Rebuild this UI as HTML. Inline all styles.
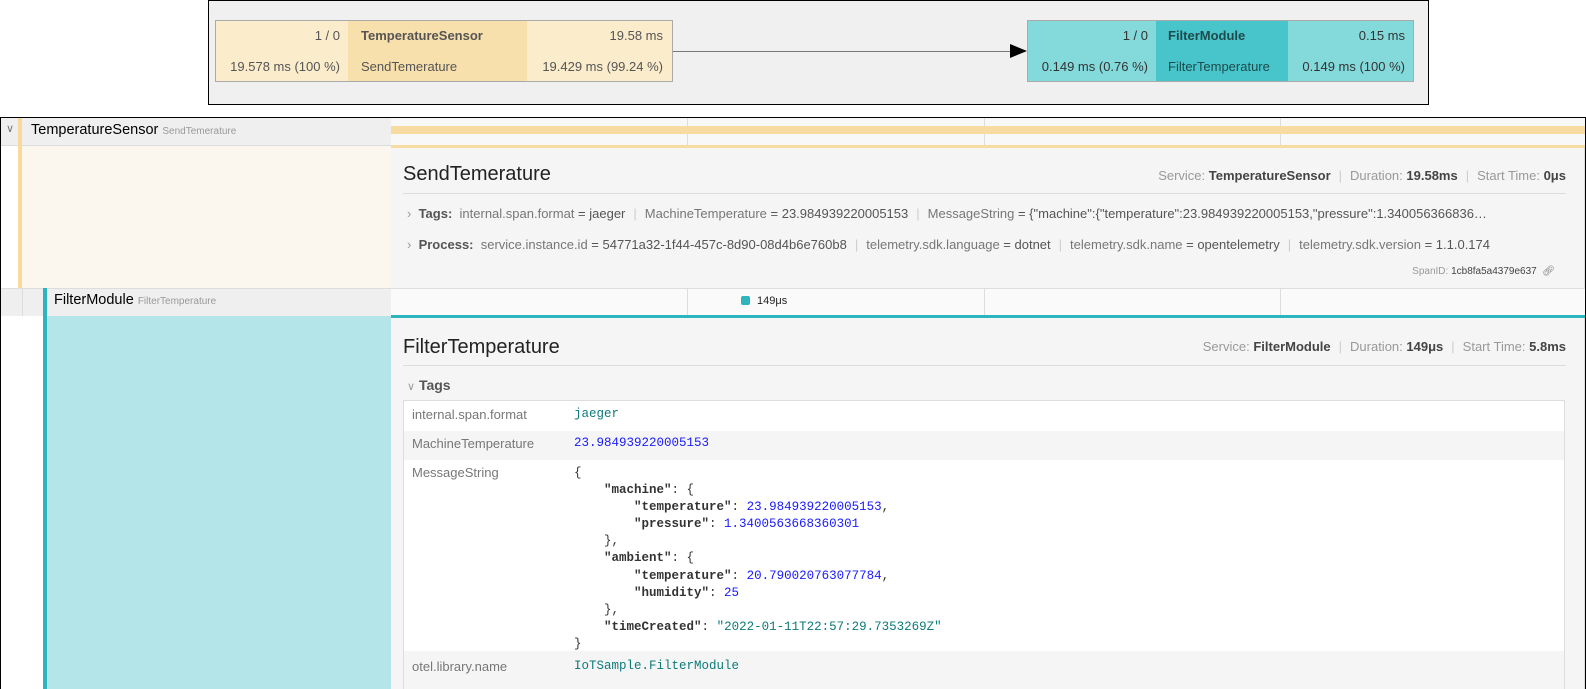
<!DOCTYPE html>
<html><head><meta charset="utf-8"><style>
*{box-sizing:border-box;margin:0;padding:0}
body{width:1586px;height:689px;background:#fff;font-family:"Liberation Sans",sans-serif;position:relative;overflow:hidden;color:#333}
.a{position:absolute}
.mono{font-family:"Liberation Mono",monospace}
.cell{position:absolute;font-size:13px;color:#555}
.sep{color:#ccc;margin:0 8px}
.k{color:#777}
</style></head><body>
<!-- top graph -->
<div class="a" style="left:208px;top:0;width:1221px;height:105px;border:1px solid #000;background:#f0f0f0"></div>
<div class="a" style="left:215px;top:20px;width:458px;height:62px;border:1px solid #aaa;background:#fbeccc"></div>
<div class="a" style="left:348px;top:21px;width:179px;height:60px;background:#f8e0ad"></div>
<div class="cell" style="left:220px;top:28px;width:120px;text-align:right">1 / 0</div>
<div class="cell" style="left:220px;top:59px;width:120px;text-align:right">19.578 ms (100 %)</div>
<div class="cell" style="left:361px;top:28px;font-weight:bold;color:#555">TemperatureSensor</div>
<div class="cell" style="left:361px;top:59px">SendTemerature</div>
<div class="cell" style="left:530px;top:28px;width:133px;text-align:right">19.58 ms</div>
<div class="cell" style="left:530px;top:59px;width:133px;text-align:right">19.429 ms (99.24 %)</div>
<div class="a" style="left:673px;top:51px;width:340px;height:1px;background:#777"></div>
<svg class="a" style="left:1010px;top:44px" width="18" height="14"><path d="M0 0L17 7L0 14Z" fill="#000"/></svg>
<div class="a" style="left:1027px;top:20px;width:387px;height:62px;border:1px solid #aaa;background:#84d9db"></div>
<div class="a" style="left:1156px;top:21px;width:132px;height:60px;background:#48c5ca"></div>
<div class="cell" style="left:1030px;top:28px;width:118px;text-align:right;color:#333">1 / 0</div>
<div class="cell" style="left:1030px;top:59px;width:118px;text-align:right;color:#333">0.149 ms (0.76 %)</div>
<div class="cell" style="left:1168px;top:28px;font-weight:bold;color:#1e4a4c">FilterModule</div>
<div class="cell" style="left:1168px;top:59px;color:#1e4a4c">FilterTemperature</div>
<div class="cell" style="left:1290px;top:28px;width:115px;text-align:right;color:#333">0.15 ms</div>
<div class="cell" style="left:1290px;top:59px;width:115px;text-align:right;color:#333">0.149 ms (100 %)</div>

<!-- bottom frame -->
<div class="a" style="left:0;top:117px;width:1586px;height:572px;border:1px solid #000;border-bottom:none;overflow:hidden">
 <div class="a" style="left:0;top:0;width:390px;height:28px;background:#efefef;border-bottom:1px solid #ddd"></div>
 <div class="a" style="left:5px;top:4px;font-size:11px;color:#777">&#8744;</div>
 <div class="a" style="left:17px;top:0;width:4px;height:170px;background:#f8d99e"></div>
 <div class="a" style="left:30px;top:4px;font-size:14.5px;color:#000">TemperatureSensor <span style="font-size:10px;color:#999">SendTemerature</span></div>
 <div class="a" style="left:390px;top:0;width:1196px;height:28px;background:#f8f8f8"></div>
 <div class="a" style="left:686px;top:0;width:1px;height:28px;background:#ddd"></div>
 <div class="a" style="left:983px;top:0;width:1px;height:28px;background:#ddd"></div>
 <div class="a" style="left:1279px;top:0;width:1px;height:28px;background:#ddd"></div>
 <div class="a" style="left:390px;top:8px;width:1196px;height:8px;background:#f8dba0"></div>
 <div class="a" style="left:390px;top:27px;width:1196px;height:3px;background:#f8dba0"></div>
 <div class="a" style="left:21px;top:28px;width:369px;height:142px;background:#fbf7ee"></div>
 <div class="a" style="left:390px;top:30px;width:1194px;height:140px;background:#f5f5f5;border-right:1px solid #ddd"></div>
 <div class="a" style="left:402px;top:45px;font-size:20px;color:#222">SendTemerature</div>
 <div class="a" style="left:1000px;top:50px;width:565px;text-align:right;font-size:13px;color:#999">Service: <b style="color:#444">TemperatureSensor</b><span class="sep">|</span>Duration: <b style="color:#444">19.58ms</b><span class="sep">|</span>Start Time: <b style="color:#444">0μs</b></div>
 <div class="a" style="left:402px;top:75px;width:1163px;height:1px;background:#ddd"></div>
 <div class="a" style="left:406px;top:88px;font-size:13px;color:#555;white-space:nowrap"><span style="color:#999">›</span>&nbsp; <b>Tags:</b>&nbsp; <span class="k">internal.span.format</span> = jaeger<span class="sep">|</span><span class="k">MachineTemperature</span> = 23.984939220005153<span class="sep">|</span><span class="k">MessageString</span> = {"machine":{"temperature":23.984939220005153,"pressure":1.340056366836…</div>
 <div class="a" style="left:406px;top:119px;font-size:13px;color:#555;white-space:nowrap"><span style="color:#999">›</span>&nbsp; <b>Process:</b>&nbsp; <span class="k">service.instance.id</span> = 54771a32-1f44-457c-8d90-08d4b6e760b8<span class="sep">|</span><span class="k">telemetry.sdk.language</span> = dotnet<span class="sep">|</span><span class="k">telemetry.sdk.name</span> = opentelemetry<span class="sep">|</span><span class="k">telemetry.sdk.version</span> = 1.1.0.174</div>
 <div class="a" style="left:1300px;top:148px;width:254px;text-align:right;font-size:10px;color:#999">SpanID: <span style="color:#444">1cb8fa5a4379e637</span> &nbsp;<span style="color:#777">&#x1F517;&#xFE0E;</span></div>
 <div class="a" style="left:0;top:170px;width:390px;height:28px;background:#efefef;border-top:1px solid #ddd"></div>
 <div class="a" style="left:21px;top:170px;width:1px;height:28px;background:#ddd"></div>
 <div class="a" style="left:42px;top:170px;width:4px;height:402px;background:#2cb5bd"></div>
 <div class="a" style="left:53px;top:174px;font-size:14.5px;color:#000">FilterModule <span style="font-size:10px;color:#999">FilterTemperature</span></div>
 <div class="a" style="left:390px;top:170px;width:1196px;height:28px;background:#fafafa;border-top:1px solid #ddd"></div>
 <div class="a" style="left:686px;top:170px;width:1px;height:28px;background:#ddd"></div>
 <div class="a" style="left:983px;top:170px;width:1px;height:28px;background:#ddd"></div>
 <div class="a" style="left:1279px;top:170px;width:1px;height:28px;background:#ddd"></div>
 <div class="a" style="left:740px;top:178px;width:9px;height:9px;border-radius:2px;background:#2cb5bd"></div>
 <div class="a" style="left:756px;top:177px;font-size:11px;color:#222">149μs</div>
 <div class="a" style="left:390px;top:197px;width:1196px;height:3px;background:#2cb5bd"></div>
 <div class="a" style="left:46px;top:198px;width:344px;height:380px;background:#b4e5e8"></div>
 <div class="a" style="left:390px;top:200px;width:1194px;height:380px;background:#f5f5f5;border-right:1px solid #ddd"></div>
 <div class="a" style="left:402px;top:218px;font-size:20px;color:#222">FilterTemperature</div>
 <div class="a" style="left:1000px;top:221px;width:565px;text-align:right;font-size:13px;color:#999">Service: <b style="color:#444">FilterModule</b><span class="sep">|</span>Duration: <b style="color:#444">149μs</b><span class="sep">|</span>Start Time: <b style="color:#444">5.8ms</b></div>
 <div class="a" style="left:402px;top:247px;width:1163px;height:1px;background:#ddd"></div>
 <div class="a" style="left:406px;top:259px;font-size:14px;color:#555"><span style="color:#999;font-size:11px">&#8744;</span> <b>Tags</b></div>
 <div class="a" style="left:402px;top:282px;width:1162px;height:300px;background:#fff;border:1px solid #ddd"></div>
 <div class="a" style="left:403px;top:313px;width:1160px;height:29px;background:#f5f5f5"></div>
 <div class="a" style="left:403px;top:533px;width:1160px;height:40px;background:#f5f5f5"></div>
 <div class="a" style="left:411px;top:289px;font-size:13px;color:#777">internal.span.format</div>
 <div class="a mono" style="left:573px;top:289px;font-size:12.5px;color:#0e7a7a">jaeger</div>
 <div class="a" style="left:411px;top:318px;font-size:13px;color:#777">MachineTemperature</div>
 <div class="a mono" style="left:573px;top:318px;font-size:12.5px;color:#1a1aff">23.984939220005153</div>
 <div class="a" style="left:411px;top:347px;font-size:13px;color:#777">MessageString</div>
 <pre class="a mono" style="left:573px;top:347px;font-size:12.5px;line-height:17.1px;color:#333">{
    <b>"machine"</b>: {
        <b>"temperature"</b>: <span style="color:#1a1aff">23.984939220005153</span>,
        <b>"pressure"</b>: <span style="color:#1a1aff">1.3400563668360301</span>
    },
    <b>"ambient"</b>: {
        <b>"temperature"</b>: <span style="color:#1a1aff">20.790020763077784</span>,
        <b>"humidity"</b>: <span style="color:#1a1aff">25</span>
    },
    <b>"timeCreated"</b>: <span style="color:#0e7a7a">"2022-01-11T22:57:29.7353269Z"</span>
}</pre>
 <div class="a" style="left:411px;top:541px;font-size:13px;color:#777">otel.library.name</div>
 <div class="a mono" style="left:573px;top:541px;font-size:12.5px;color:#0e7a7a">IoTSample.FilterModule</div>
</div>
</body></html>
